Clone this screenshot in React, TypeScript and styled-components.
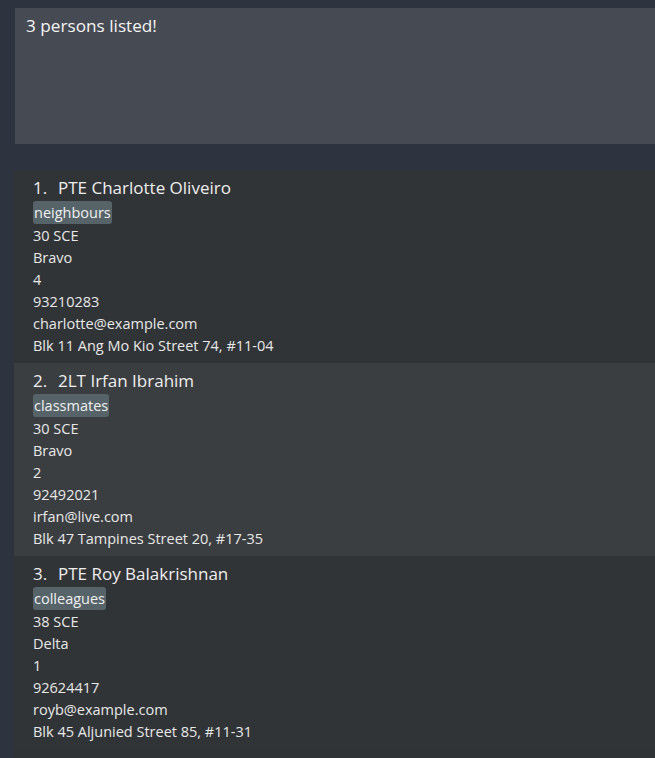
import React from "react";
import styled, { createGlobalStyle } from "styled-components";

const GlobalStyle = createGlobalStyle`
  html, body {
    margin: 0;
    padding: 0;
    background: #2e3340;
    overflow: hidden;
  }
  body {
    font-family: "Open Sans", "Noto Sans", sans-serif;
    color: #ececec;
  }
`;

type Person = {
  rank: string;
  name: string;
  tag: string;
  unit: string;
  company: string;
  platoon: string;
  phone: string;
  email: string;
  address: string;
};

const persons: Person[] = [
  {
    rank: "PTE",
    name: "Charlotte Oliveiro",
    tag: "neighbours",
    unit: "30 SCE",
    company: "Bravo",
    platoon: "4",
    phone: "93210283",
    email: "charlotte@example.com",
    address: "Blk 11 Ang Mo Kio Street 74, #11-04",
  },
  {
    rank: "2LT",
    name: "Irfan Ibrahim",
    tag: "classmates",
    unit: "30 SCE",
    company: "Bravo",
    platoon: "2",
    phone: "92492021",
    email: "irfan@live.com",
    address: "Blk 47 Tampines Street 20, #17-35",
  },
  {
    rank: "PTE",
    name: "Roy Balakrishnan",
    tag: "colleagues",
    unit: "38 SCE",
    company: "Delta",
    platoon: "1",
    phone: "92624417",
    email: "royb@example.com",
    address: "Blk 45 Aljunied Street 85, #11-31",
  },
];

export default function App() {
  return (
    <>
      <GlobalStyle />
      <SWindow>
        <SResultBox>3 persons listed!</SResultBox>
        <SList>
          {persons.map((p, i) => (
            <SCard key={p.email} $odd={i % 2 === 1}>
              <SName>
                <SIndex>{i + 1}.</SIndex>
                {p.rank} {p.name}
              </SName>
              <STags>
                <STag>{p.tag}</STag>
              </STags>
              <SField>{p.unit}</SField>
              <SField>{p.company}</SField>
              <SField>{p.platoon}</SField>
              <SField>{p.phone}</SField>
              <SField>{p.email}</SField>
              <SField>{p.address}</SField>
            </SCard>
          ))}
        </SList>
      </SWindow>
    </>
  );
}

const SWindow = styled.div`
  display: flex;
  flex-direction: column;
  padding: 8px 0 0 15px;
  height: 750px;
`;

const SResultBox = styled.div`
  background: #464a52;
  height: 136px;
  box-sizing: border-box;
  padding: 7px 11px;
  font-size: 17.2px;
  line-height: 22px;
  color: #f4f4f4;
`;

const SList = styled.div`
  margin-top: 26px;
  margin-left: -1px;
  flex: 1;
  background: #303336;
  display: flex;
  flex-direction: column;
`;

const SCard = styled.div<{ $odd: boolean }>`
  height: 193px;
  box-sizing: border-box;
  padding: 6px 19px 0;
  background: ${(p) => (p.$odd ? "#3b3e41" : "#313437")};
`;

const SName = styled.div`
  font-size: 17px;
  line-height: 24px;
  height: 25px;
  color: #eeeeee;
  white-space: nowrap;
`;

const SIndex = styled.span`
  display: inline-block;
  width: 25px;
`;

const STags = styled.div`
  display: flex;
  height: 24px;
`;

const STag = styled.span`
  background: #56646a;
  border-radius: 3px;
  padding: 0 1px;
  height: 23px;
  font-size: 14.5px;
  line-height: 23px;
  color: #f0f0f0;
`;

const SField = styled.div`
  font-size: 14.5px;
  line-height: 22px;
  color: #e8e8e8;
`;
